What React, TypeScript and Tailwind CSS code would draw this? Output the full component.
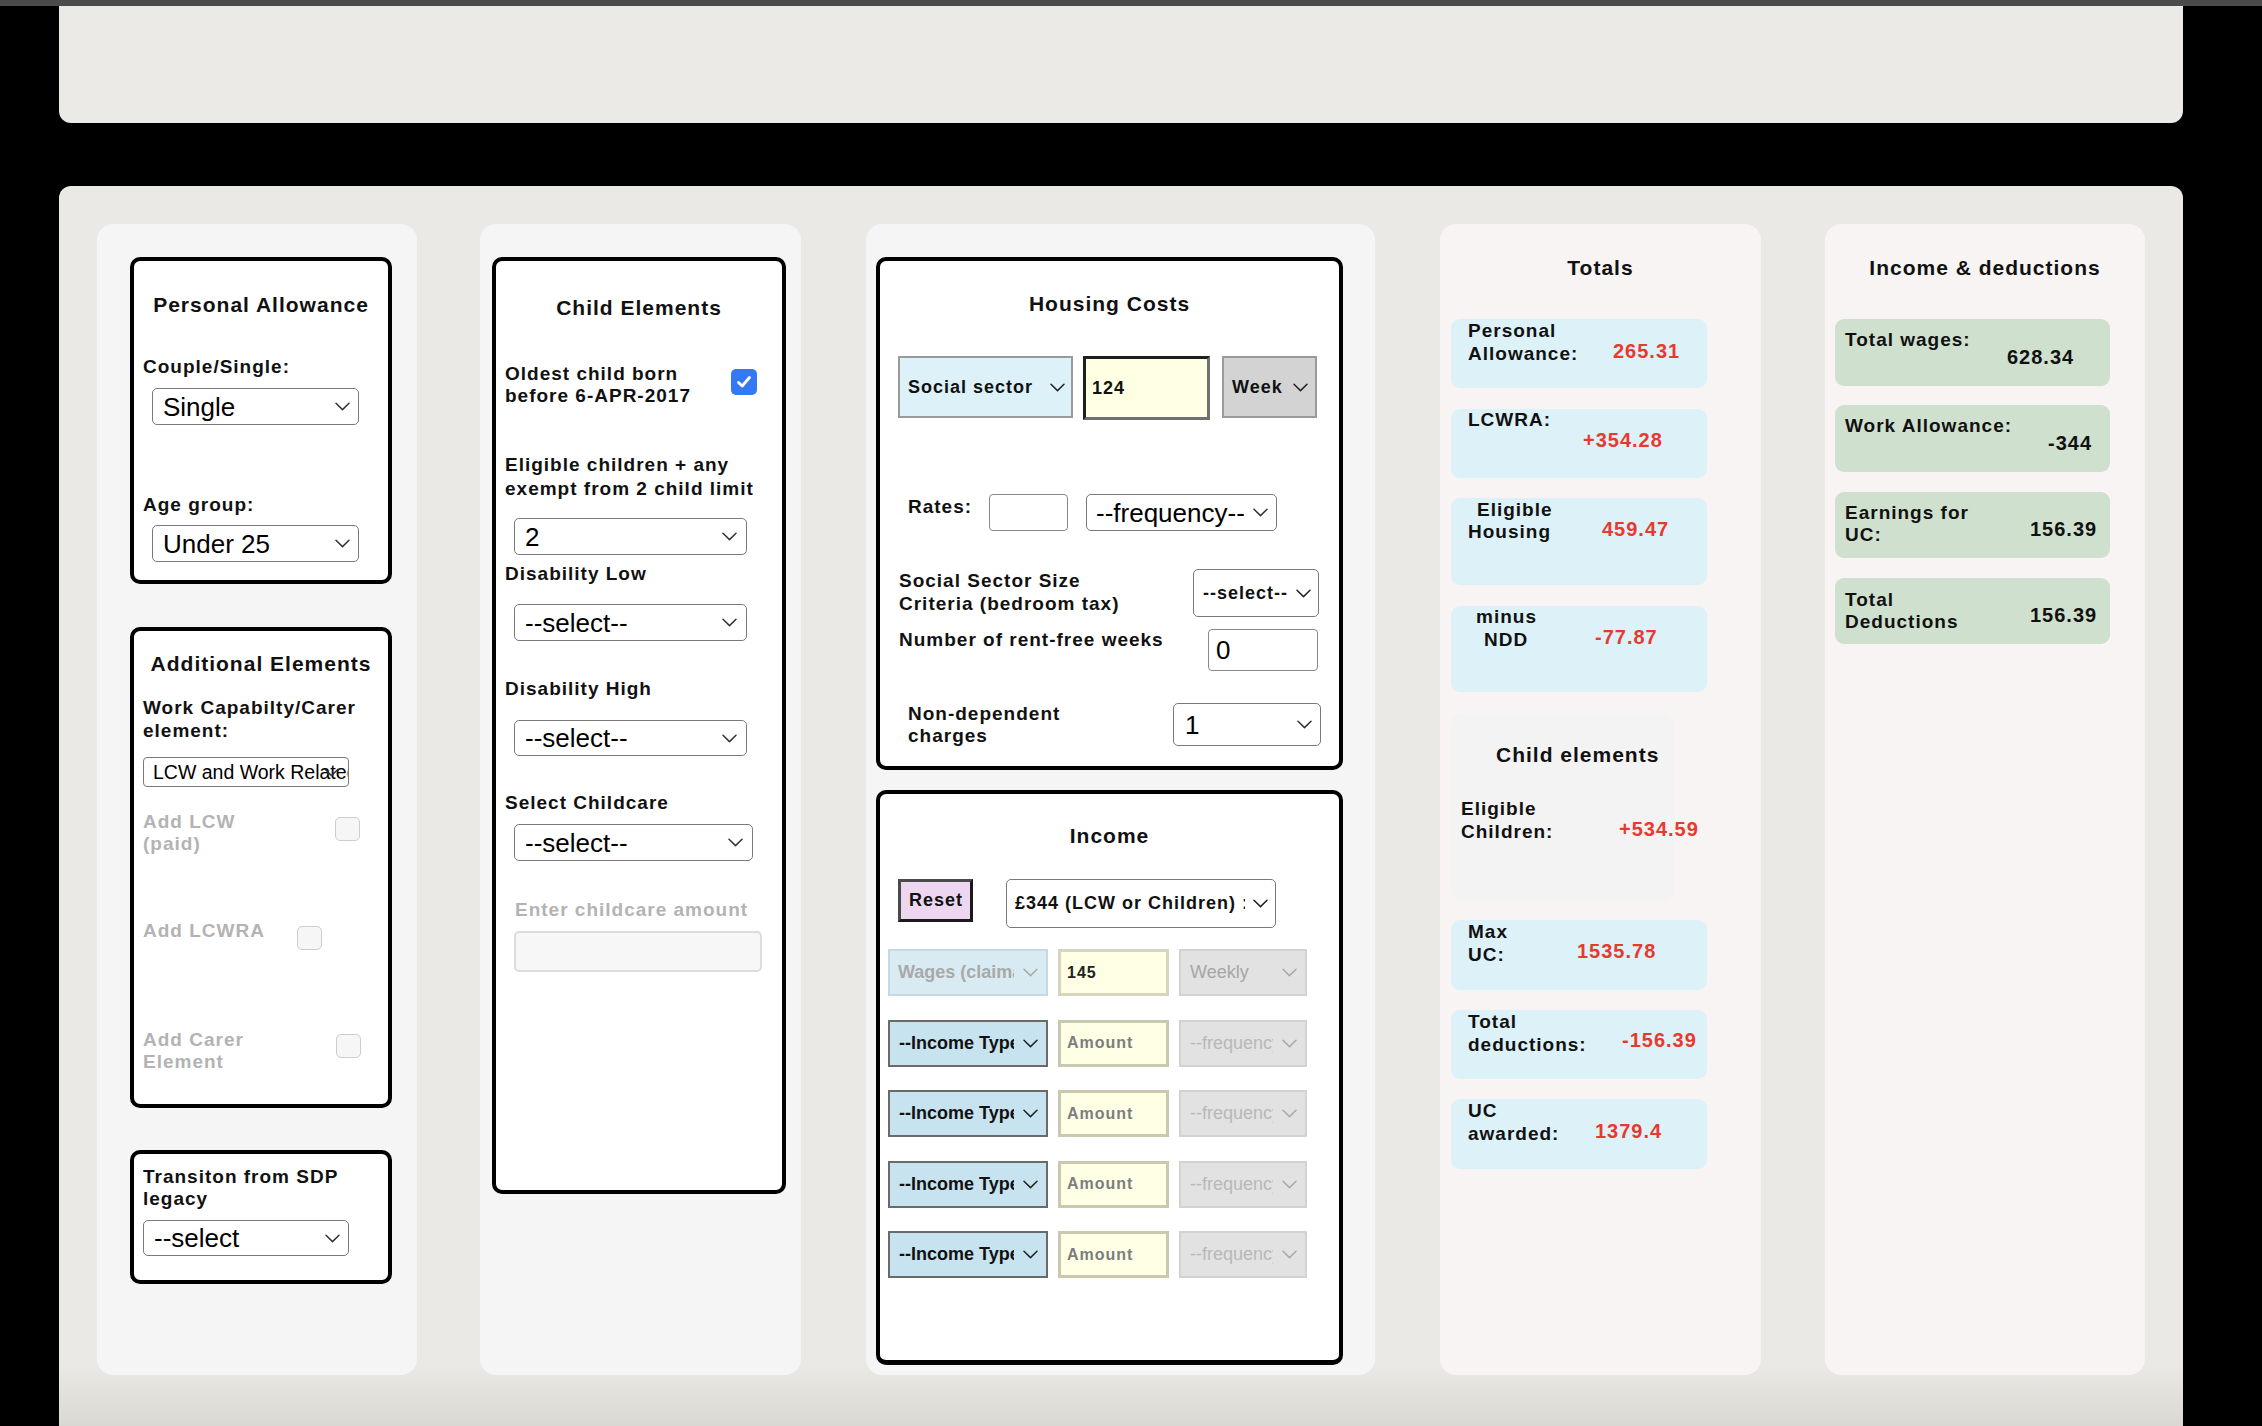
import React from "react";

const T = "text-[21px] font-bold tracking-[1px] leading-[24px] text-center whitespace-nowrap";
const L = "text-[19px] font-bold tracking-[1px] leading-[22px] whitespace-nowrap shrink-0";
const CL = "text-[19px] font-bold tracking-[1px] leading-[22.5px] whitespace-nowrap shrink-0 text-[#111]";
const V = "text-[20px] font-bold tracking-[1px] leading-[23px] whitespace-nowrap text-[#e8392f]";
const VB = "text-[20px] font-bold tracking-[1px] leading-[23px] whitespace-nowrap text-[#111]";
const BOX = "border-[4px] border-black rounded-[10px] bg-white flex flex-col shrink-0";
const BIG = "bg-white border-[1.5px] border-[#7a7a7a] rounded-[5px]";
const BIGTXT = "pl-[10px] text-[26px] leading-[30px] text-black";

function Chev({ className = "" }: { className?: string }) {
  return (
    <svg width="15" height="9" viewBox="0 0 15 9" className={"shrink-0 " + className}>
      <path d="M1 1.2L7.5 7.6L14 1.2" fill="none" stroke="currentColor" strokeWidth="1.5" strokeLinecap="round" strokeLinejoin="round" />
    </svg>
  );
}

function Sel({ text, box, txt, chev }: { text: string; box: string; txt: string; chev: string }) {
  return (
    <div className={"flex items-center overflow-hidden shrink-0 " + box}>
      <span className={"flex-1 min-w-0 overflow-hidden whitespace-nowrap " + txt}>{text}</span>
      <Chev className={chev} />
    </div>
  );
}

function GrayCheck({ className }: { className: string }) {
  return <div className={"w-[25px] h-[24px] rounded-[5px] border-[1.5px] border-[#cdcdcd] bg-[#f6f6f6] shrink-0 " + className} />;
}

function IncomeRow({ first }: { first?: boolean }) {
  return (
    <div className="flex ml-[8px] gap-[10px] h-[47px]">
      <Sel
        text={first ? "Wages (claimant)" : "--Income Type--"}
        box={first ? "w-[160px] h-[47px] bg-[#d8ebf3] border-2 border-[#c4d9e3]" : "w-[160px] h-[47px] bg-[#c6e3ef] border-2 border-[#6a6a6a]"}
        txt={first ? "pl-[8px] text-[18px] font-bold text-[#a9a9a9]" : "pl-[9px] text-[18px] font-bold text-[#111]"}
        chev={first ? "ml-[9px] mr-[8px] text-[#a9a9a9]" : "ml-[9px] mr-[8px] text-[#222]"}
      />
      <div className={"w-[111px] h-[47px] border-[3px] bg-[#ffffe6] flex items-center shrink-0 " + (first ? "border-[#d6d6bf]" : "border-[#c9c9b0]")}>
        <span className={"pl-[6px] text-[16px] font-bold tracking-[1px] " + (first ? "text-[#222]" : "text-[#7d7d7d]")}>{first ? "145" : "Amount"}</span>
      </div>
      <Sel
        text={first ? "Weekly" : "--frequency--"}
        box="w-[128px] h-[47px] bg-[#e2e2e2] border-2 border-[#d2d2d2]"
        txt={"pl-[9px] text-[18px] " + (first ? "text-[#a6a6a6]" : "text-[#b8b8b8]")}
        chev="ml-[9px] mr-[8px] text-[#a9a9a9]"
      />
    </div>
  );
}

export default function App() {
  return (
    <div className="w-[2262px] h-[1426px] bg-black overflow-hidden font-['Liberation_Sans',Arial,sans-serif] text-[#111]">
      <div className="h-[6px] bg-[#4b4b4b]" />
      <div className="ml-[59px] w-[2124px] h-[117px] bg-[#ebeae6] rounded-b-[12px]" />
      <div className="ml-[59px] w-[2124px] mt-[63px] h-[1240px] rounded-t-[12px] bg-[linear-gradient(to_bottom,#eae9e5_0%,#eae9e5_95%,#d9d8d3_100%)] px-[38px] pt-[38px] flex items-start">
        {/* Column 1 */}
        <div className="w-[320px] h-[1151px] bg-[#f5f5f5] rounded-[16px] flex flex-col shrink-0">
          <div className={BOX + " ml-[33px] mt-[33px] w-[262px] h-[327px]"}>
            <div className={T + " mt-[32px]"}>Personal Allowance</div>
            <div className={L + " mt-[39px] ml-[9px]"}>Couple/Single:</div>
            <Sel text="Single" box={BIG + " mt-[10px] ml-[18px] w-[207px] h-[37px]"} txt={BIGTXT} chev="mr-[8px] text-[#333]" />
            <div className={L + " mt-[69px] ml-[9px]"}>Age group:</div>
            <Sel text="Under 25" box={BIG + " mt-[9px] ml-[18px] w-[207px] h-[37px]"} txt={BIGTXT} chev="mr-[8px] text-[#333]" />
          </div>

          <div className={BOX + " ml-[33px] mt-[43px] w-[262px] h-[481px]"}>
            <div className={T + " mt-[21px]"}>Additional Elements</div>
            <div className={L + " mt-[20px] ml-[9px] leading-[23px]"}>
              Work Capabilty/Carer
              <br />
              element:
            </div>
            <div className="relative mt-[15px] ml-[9px] w-[206px] h-[30px] border-[1.5px] border-[#7a7a7a] rounded-[4px] bg-white overflow-hidden flex items-center shrink-0">
              <span className="pl-[9px] text-[19.5px] leading-[22px] whitespace-nowrap text-black">LCW and Work Related Activity</span>
              <Chev className="absolute right-[9px] top-[10px] text-[#333]" />
            </div>
            <div className="flex items-start mt-[24px] ml-[9px]">
              <div className={L + " w-[192px] text-[#b3b3b3]"}>
                Add LCW
                <br />
                (paid)
              </div>
              <GrayCheck className="mt-[6px]" />
            </div>
            <div className="flex items-start mt-[65px] ml-[9px] h-[22px]">
              <div className={L + " w-[154px] text-[#b3b3b3]"}>Add LCWRA</div>
              <GrayCheck className="mt-[6px]" />
            </div>
            <div className="flex items-start mt-[87px] ml-[9px]">
              <div className={L + " w-[193px] text-[#b3b3b3]"}>
                Add Carer
                <br />
                Element
              </div>
              <GrayCheck className="mt-[5px]" />
            </div>
          </div>

          <div className={BOX + " ml-[33px] mt-[42px] w-[262px] h-[134px]"}>
            <div className={L + " mt-[12px] ml-[9px]"}>
              Transiton from SDP
              <br />
              legacy
            </div>
            <Sel text="--select" box={BIG + " mt-[10px] ml-[9px] w-[206px] h-[36px]"} txt={BIGTXT} chev="mr-[8px] text-[#333]" />
          </div>
        </div>

        {/* Column 2 */}
        <div className="ml-[63px] w-[321px] h-[1151px] bg-[#f5f5f5] rounded-[16px] flex flex-col shrink-0">
          <div className={BOX + " ml-[12px] mt-[33px] w-[294px] h-[937px]"}>
            <div className={T + " mt-[35px]"}>Child Elements</div>
            <div className="flex items-start mt-[43px] ml-[9px]">
              <div className={L + " w-[226px] leading-[21px]"}>
                Oldest child born
                <br />
                before 6-APR-2017
              </div>
              <div className="w-[26px] h-[26px] rounded-[5px] bg-[#3478f6] flex items-center justify-center shrink-0 mt-[6px]">
                <svg width="18" height="18" viewBox="0 0 18 18">
                  <path d="M3.5 9.5L7.2 13L14.5 4.5" fill="none" stroke="white" strokeWidth="2.8" strokeLinecap="round" strokeLinejoin="round" />
                </svg>
              </div>
            </div>
            <div className={L + " mt-[46px] ml-[9px] leading-[24px]"}>
              Eligible children + any
              <br />
              exempt from 2 child limit
            </div>
            <Sel text="2" box={BIG + " mt-[17px] ml-[18px] w-[233px] h-[37px]"} txt={BIGTXT} chev="mr-[9px] text-[#333]" />
            <div className={L + " mt-[8px] ml-[9px]"}>Disability Low</div>
            <Sel text="--select--" box={BIG + " mt-[19px] ml-[18px] w-[233px] h-[37px]"} txt={BIGTXT} chev="mr-[9px] text-[#333]" />
            <div className={L + " mt-[37px] ml-[9px]"}>Disability High</div>
            <Sel text="--select--" box={BIG + " mt-[20px] ml-[18px] w-[233px] h-[36px]"} txt={BIGTXT} chev="mr-[9px] text-[#333]" />
            <div className={L + " mt-[36px] ml-[9px]"}>Select Childcare</div>
            <Sel text="--select--" box={BIG + " mt-[10px] ml-[18px] w-[239px] h-[37px]"} txt={BIGTXT} chev="mr-[9px] text-[#333]" />
            <div className={L + " mt-[38px] ml-[19px] text-[#b3b3b3]"}>Enter childcare amount</div>
            <div className="mt-[10px] ml-[18px] w-[248px] h-[41px] rounded-[5px] border-2 border-[#dcdcdc] bg-[#f7f7f7] shrink-0" />
          </div>
        </div>

        {/* Column 3 */}
        <div className="ml-[65px] w-[509px] h-[1151px] bg-[#f5f5f5] rounded-[16px] flex flex-col shrink-0">
          <div className={BOX + " ml-[10px] mt-[33px] w-[467px] h-[513px]"}>
            <div className={T + " mt-[31px]"}>Housing Costs</div>
            <div className="flex items-start mt-[40px]">
              <Sel
                text="Social sector"
                box="ml-[18px] w-[175px] h-[62px] bg-[#ddf1f9] border-2 border-[#9a9a9a]"
                txt="pl-[8px] text-[18px] font-bold tracking-[1px] text-[#111]"
                chev="ml-[6px] mr-[6px] text-[#222]"
              />
              <div className="ml-[10px] w-[127px] h-[64px] bg-[#ffffe3] border-[3px] border-t-[#1f1f1f] border-l-[#1f1f1f] border-r-[#707070] border-b-[#707070] flex items-center shrink-0">
                <span className="pl-[6px] text-[18px] font-bold tracking-[1px] text-[#111]">124</span>
              </div>
              <Sel
                text="Week"
                box="ml-[12px] w-[95px] h-[62px] bg-[#d3d3d3] border-2 border-[#9a9a9a]"
                txt="pl-[8px] text-[18px] font-bold tracking-[1px] text-[#111]"
                chev="ml-[4px] mr-[7px] text-[#222]"
              />
            </div>
            <div className="flex items-start mt-[74px] ml-[28px]">
              <div className={L + " w-[81px] mt-[2px]"}>Rates:</div>
              <div className="w-[79px] h-[37px] border-[1.5px] border-[#888] rounded-[4px] bg-white shrink-0" />
              <Sel text="--frequency--" box={BIG + " ml-[18px] w-[191px] h-[37px]"} txt="pl-[9px] text-[26px] leading-[30px] text-black" chev="ml-[2px] mr-[8px] text-[#333]" />
            </div>
            <div className="flex items-start mt-[38px] ml-[19px]">
              <div className={L + " w-[294px] leading-[23px]"}>
                Social Sector Size
                <br />
                Criteria (bedroom tax)
              </div>
              <Sel
                text="--select--"
                box={BIG + " w-[126px] h-[48px]"}
                txt="pl-[9px] text-[18px] font-bold tracking-[1px] text-[#111]"
                chev="ml-[2px] mr-[7px] text-[#222]"
              />
            </div>
            <div className="flex items-start mt-[12px] ml-[19px]">
              <div className={L + " w-[309px]"}>Number of rent-free weeks</div>
              <div className="w-[110px] h-[42px] border-[1.5px] border-[#888] rounded-[4px] bg-white flex items-center shrink-0">
                <span className="pl-[7px] text-[26px] text-black">0</span>
              </div>
            </div>
            <div className="flex items-start mt-[32px] ml-[28px]">
              <div className={L + " w-[265px] leading-[21px]"}>
                Non-dependent
                <br />
                charges
              </div>
              <Sel text="1" box={BIG + " w-[148px] h-[43px]"} txt="pl-[11px] text-[26px] leading-[30px] text-black" chev="mr-[8px] text-[#333]" />
            </div>
          </div>

          <div className={BOX + " ml-[10px] mt-[20px] w-[467px] h-[575px] border-b-[5px]"}>
            <div className={T + " mt-[30px]"}>Income</div>
            <div className="flex items-start mt-[31px] ml-[18px]">
              <div className="w-[75px] h-[43px] bg-[#ecd6f0] border-[3px] border-t-[#4a4a4a] border-l-[#4a4a4a] border-r-[#1a1a1a] border-b-[#1a1a1a] flex items-center shrink-0">
                <span className="pl-[8px] text-[18px] font-bold tracking-[1px] text-[#111]">Reset</span>
              </div>
              <Sel
                text="£344 (LCW or Children) : Work allowance"
                box={BIG + " ml-[33px] w-[270px] h-[49px]"}
                txt="pl-[8px] text-[18px] font-bold tracking-[1px] text-[#111]"
                chev="ml-[8px] mr-[7px] text-[#222]"
              />
            </div>
            <div className="flex flex-col gap-[23.5px] mt-[21px]">
              <IncomeRow first />
              <IncomeRow />
              <IncomeRow />
              <IncomeRow />
              <IncomeRow />
            </div>
          </div>
        </div>

        {/* Column 4 */}
        <div className="ml-[65px] w-[321px] h-[1151px] bg-[#f8f4f3] rounded-[16px] flex flex-col shrink-0">
          <div className={T + " mt-[32px]"}>Totals</div>
          <div className="mt-[39px] ml-[11px] w-[256px] h-[69px] rounded-[9px] bg-[#ddf1f8] flex items-start shrink-0">
            <div className={CL + " ml-[17px] mt-[1px] w-[145px]"}>
              Personal
              <br />
              Allowance:
            </div>
            <div className={V + " mt-[21px]"}>265.31</div>
          </div>
          <div className="mt-[21px] ml-[11px] w-[256px] h-[69px] rounded-[9px] bg-[#ddf1f8] flex items-start shrink-0">
            <div className={CL + " ml-[17px] w-[115px]"}>LCWRA:</div>
            <div className={V + " mt-[20px]"}>+354.28</div>
          </div>
          <div className="mt-[20px] ml-[11px] w-[256px] h-[87px] rounded-[9px] bg-[#ddf1f8] flex items-start shrink-0">
            <div className={CL + " ml-[17px] mt-[0.5px] w-[134px]"}>
              <div className="ml-[9px]">Eligible</div>
              <div>Housing</div>
            </div>
            <div className={V + " mt-[19.5px]"}>459.47</div>
          </div>
          <div className="mt-[21px] ml-[11px] w-[256px] h-[86px] rounded-[9px] bg-[#ddf1f8] flex items-start shrink-0">
            <div className={CL + " ml-[17px] w-[127px]"}>
              <div className="ml-[8px]">minus</div>
              <div className="ml-[16px]">NDD</div>
            </div>
            <div className={V + " mt-[20px]"}>-77.87</div>
          </div>
          <div className="mt-[21px] ml-[11px] w-[224px] h-[187px] rounded-[12px] bg-[#f4f3f3] flex flex-col shrink-0">
            <div className="text-[21px] font-bold tracking-[1px] leading-[24px] whitespace-nowrap ml-[45px] mt-[30px]">Child elements</div>
            <div className="flex items-start mt-[31px]">
              <div className={CL + " ml-[10px] w-[158px]"}>
                Eligible
                <br />
                Children:
              </div>
              <div className={V + " mt-[20px]"}>+534.59</div>
            </div>
          </div>
          <div className="mt-[20px] ml-[11px] w-[256px] h-[70px] rounded-[9px] bg-[#ddf1f8] flex items-start shrink-0">
            <div className={CL + " ml-[17px] mt-[1px] w-[109px]"}>
              Max
              <br />
              UC:
            </div>
            <div className={V + " mt-[20px]"}>1535.78</div>
          </div>
          <div className="mt-[20px] ml-[11px] w-[256px] h-[69px] rounded-[9px] bg-[#ddf1f8] flex items-start shrink-0">
            <div className={CL + " ml-[17px] mt-[1px] w-[154px]"}>
              Total
              <br />
              deductions:
            </div>
            <div className={V + " mt-[19px]"}>-156.39</div>
          </div>
          <div className="mt-[20px] ml-[11px] w-[256px] h-[70px] rounded-[9px] bg-[#ddf1f8] flex items-start shrink-0">
            <div className={CL + " ml-[17px] mt-[1px] w-[127px]"}>
              UC
              <br />
              awarded:
            </div>
            <div className={V + " mt-[21px]"}>1379.4</div>
          </div>
        </div>

        {/* Column 5 */}
        <div className="ml-[64px] w-[320px] h-[1151px] bg-[#f8f4f3] rounded-[16px] flex flex-col shrink-0">
          <div className={T + " mt-[32px]"}>Income &amp; deductions</div>
          <div className="mt-[39px] ml-[10px] w-[275px] h-[67px] rounded-[9px] bg-[#cfe0ce] flex items-start shrink-0">
            <div className={CL + " ml-[10px] mt-[9.5px] w-[162px]"}>Total wages:</div>
            <div className={VB + " mt-[27px]"}>628.34</div>
          </div>
          <div className="mt-[19px] ml-[10px] w-[275px] h-[67px] rounded-[9px] bg-[#cfe0ce] flex items-start shrink-0">
            <div className={CL + " ml-[10px] mt-[9.5px] w-[203px]"}>Work Allowance:</div>
            <div className={VB + " mt-[27px]"}>-344</div>
          </div>
          <div className="mt-[20px] ml-[10px] w-[275px] h-[66px] rounded-[9px] bg-[#cfe0ce] flex items-start shrink-0">
            <div className={CL + " ml-[10px] mt-[9.5px] w-[185px]"}>
              Earnings for
              <br />
              UC:
            </div>
            <div className={VB + " mt-[26px]"}>156.39</div>
          </div>
          <div className="mt-[20px] ml-[10px] w-[275px] h-[66px] rounded-[9px] bg-[#cfe0ce] flex items-start shrink-0">
            <div className={CL + " ml-[10px] mt-[10.5px] w-[185px]"}>
              Total
              <br />
              Deductions
            </div>
            <div className={VB + " mt-[26px]"}>156.39</div>
          </div>
        </div>
      </div>
    </div>
  );
}
